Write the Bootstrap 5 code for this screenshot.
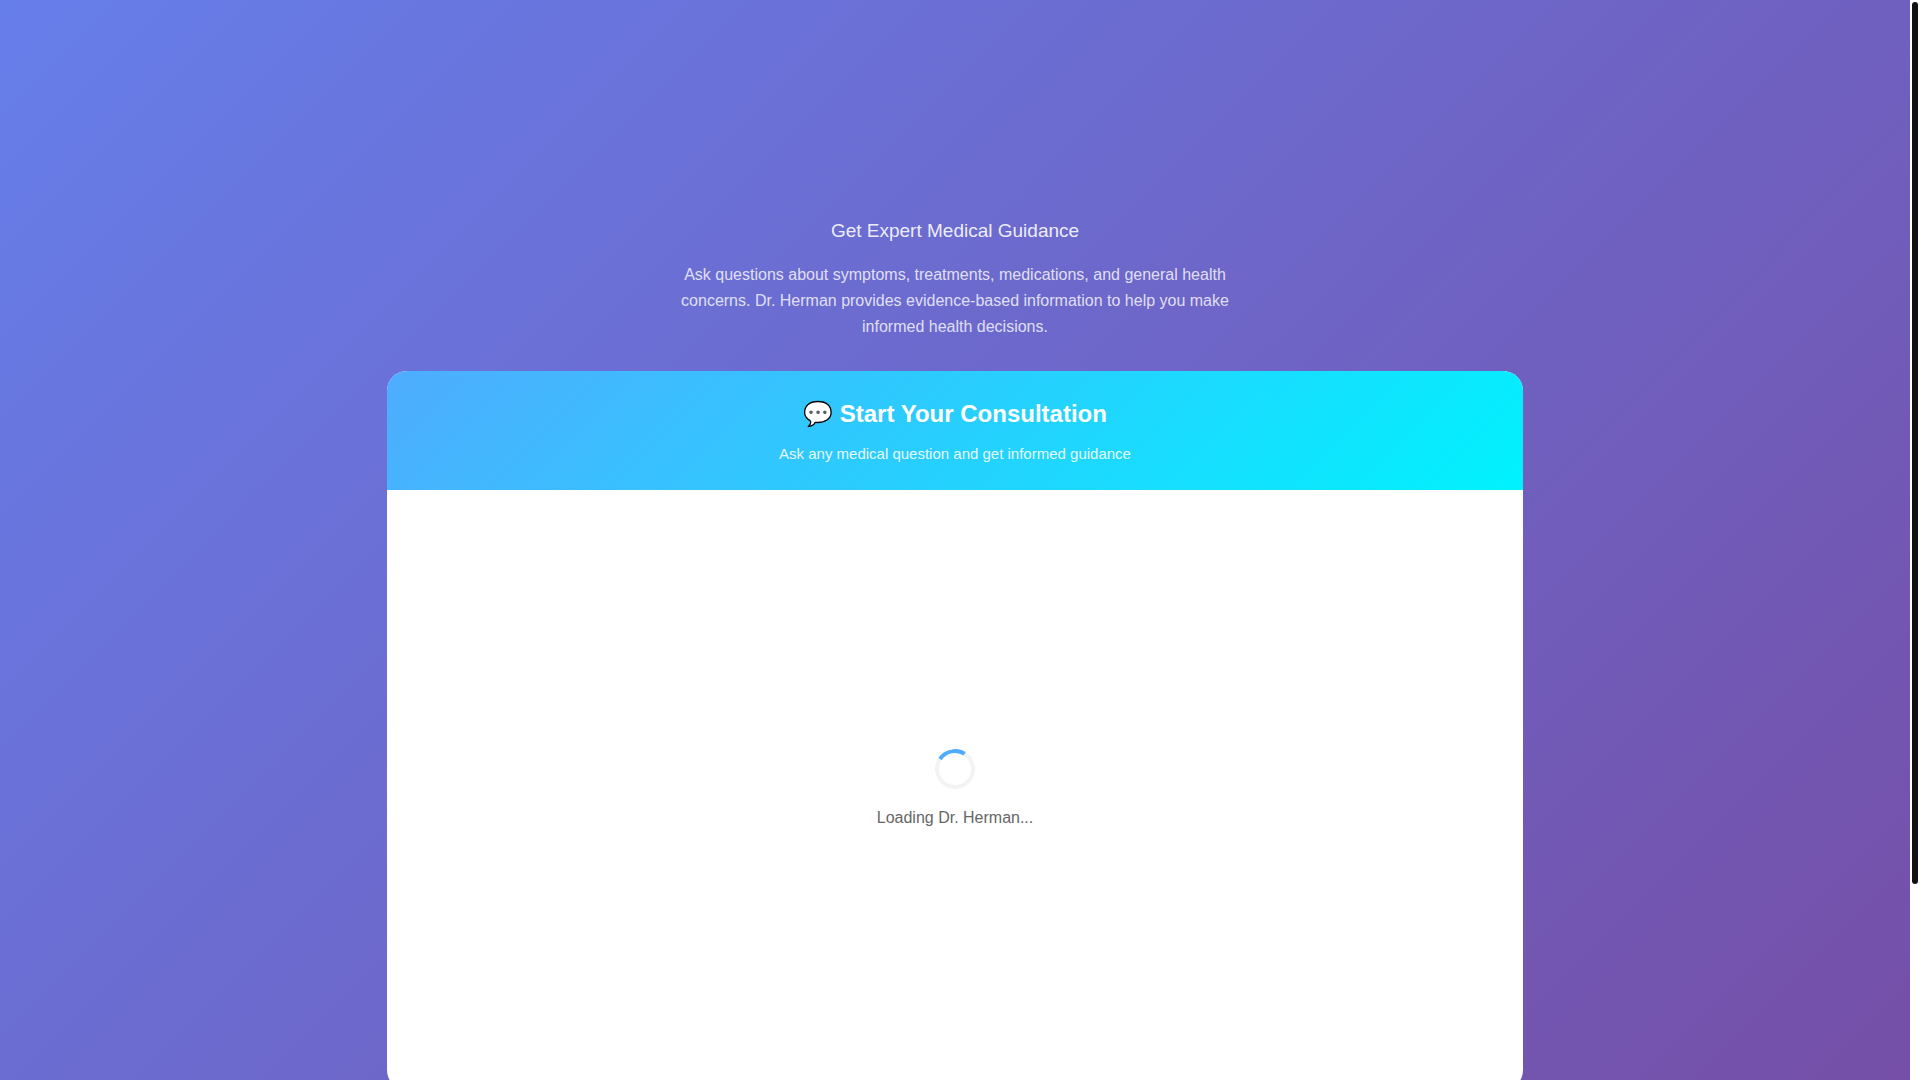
<!DOCTYPE html>
<html lang="en">
<head>
<meta charset="utf-8">
<meta name="viewport" content="width=device-width, initial-scale=1">
<title>Dr. Herman</title>
<link href="https://cdn.jsdelivr.net/npm/bootstrap@5.3.0/dist/css/bootstrap.min.css" rel="stylesheet">
<style>
body { font-family: Arial, "Liberation Sans", sans-serif; font-size: 16px; line-height: 26px; }
.page-view { background: linear-gradient(135deg, #667eea 0%, #764ba2 100%); padding: 215px 0 227px; }
.page-inner { max-width: 1200px; padding: 0 32px; }
.intro-title { font-size: 19px; line-height: 31px; color: rgba(255,255,255,.9); }
.intro-text { max-width: 600px; margin-bottom: 31px; color: rgba(255,255,255,.8); }
.chat-card { border-radius: 20px; }
.chat-head { background: linear-gradient(135deg, #4facfe 0%, #00f2fe 100%); }
.chat-title { font-size: 24px; line-height: 38px; }
.chat-sub { font-size: 15px; line-height: 25px; color: rgba(255,255,255,.9); }
.chat-body { height: 600px; color: #666; }
.loader { width: 40px; height: 40px; border: 4px solid #f3f3f3; border-top-color: #4facfe; border-radius: 50%; transform: rotate(-12deg); }
.scroll-track { width: 10px; padding: 2px; }
.scroll-thumb { height: 82%; background: #111; border-radius: 3px; }
</style>
<script src="https://cdn.jsdelivr.net/npm/bootstrap@5.3.0/dist/js/bootstrap.bundle.min.js" defer></script>
</head>
<body>
<div class="d-flex vh-100 overflow-hidden">
  <main class="flex-grow-1 overflow-hidden">
    <div class="page-view">
      <div class="page-inner mx-auto">
        <section class="text-center">
          <h1 class="intro-title fw-normal mb-3">Get Expert Medical Guidance</h1>
          <p class="intro-text mx-auto">Ask questions about symptoms, treatments, medications, and general health concerns. Dr. Herman provides evidence-based information to help you make informed health decisions.</p>
        </section>
        <section class="chat-card bg-white overflow-hidden">
          <header class="chat-head text-center text-white p-4">
            <h2 class="chat-title fw-bold mb-2">💬 Start Your Consultation</h2>
            <p class="chat-sub mb-0">Ask any medical question and get informed guidance</p>
          </header>
          <div class="chat-body d-flex flex-column align-items-center justify-content-center gap-3" role="status">
            <div class="loader"></div>
            <p class="mb-0">Loading Dr. Herman...</p>
          </div>
        </section>
      </div>
    </div>
  </main>
  <div class="scroll-track bg-white flex-shrink-0" aria-hidden="true">
    <div class="scroll-thumb"></div>
  </div>
</div>
</body>
</html>
